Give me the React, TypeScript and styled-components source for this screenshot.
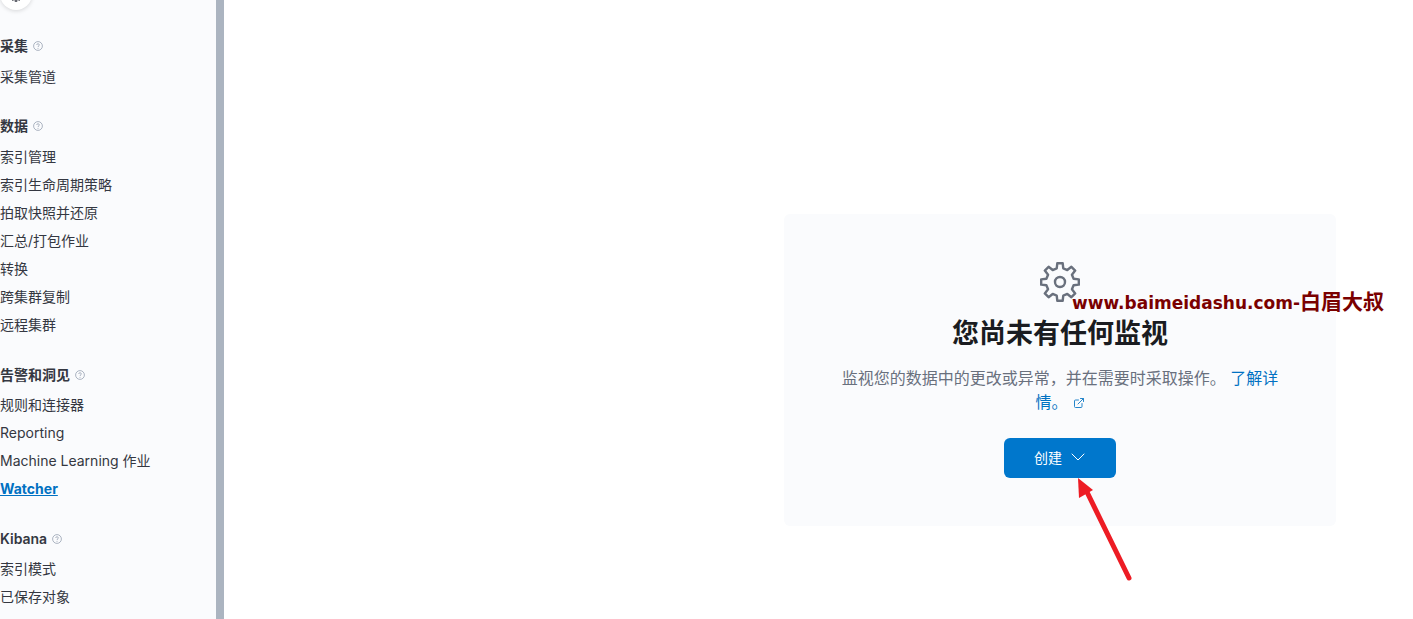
import styled, { createGlobalStyle } from 'styled-components';
import { ChevronDown, ExternalLink } from 'lucide-react';

const NAV_SECTIONS = [
  { title: '采集', links: ['采集管道'] },
  {
    title: '数据',
    links: ['索引管理', '索引生命周期策略', '拍取快照并还原', '汇总/打包作业', '转换', '跨集群复制', '远程集群'],
  },
  { title: '告警和洞见', links: ['规则和连接器', 'Reporting', 'Machine Learning 作业', 'Watcher'] },
  { title: 'Kibana', links: ['索引模式', '已保存对象'] },
];

const ACTIVE_LINK = 'Watcher';

function gearPath(cx: number, cy: number, outer: number, inner: number, teeth: number) {
  const step = (Math.PI * 2) / teeth;
  const points: string[] = [];
  for (let i = 0; i < teeth; i++) {
    const a = i * step - Math.PI / 2;
    [
      [inner, a - step * 0.3],
      [outer, a - step * 0.18],
      [outer, a + step * 0.18],
      [inner, a + step * 0.3],
    ].forEach(([r, t]) => points.push(`${(cx + r * Math.cos(t)).toFixed(2)} ${(cy + r * Math.sin(t)).toFixed(2)}`));
  }
  return `M${points.join('L')}Z`;
}

function HelpIcon() {
  return (
    <S.HelpSvg viewBox="0 0 10 10">
      <circle cx="5" cy="5" r="4.4" fill="none" stroke="currentColor" strokeWidth="0.8" />
      <path d="M3.7 4c0-.8.6-1.3 1.3-1.3S6.300 3.200 6.300 3.900C6.300 5 5 4.900 5 6" fill="none" stroke="currentColor" strokeWidth="0.8" />
      <circle cx="5" cy="7.300" r="0.5" fill="currentColor" />
    </S.HelpSvg>
  );
}

export default function App() {
  return (
    <S.Page>
      <GlobalStyle />
      <S.Sidebar>
        <S.RoundButton>
          <S.RoundGlyph viewBox="0 0 16 16">
            <path d={gearPath(8, 8, 6, 4.500, 8)} fill="none" stroke="#343741" strokeWidth="1.200" />
          </S.RoundGlyph>
        </S.RoundButton>
        {NAV_SECTIONS.map(section => (
          <S.Section key={section.title}>
            <S.SectionTitle>
              {section.title}
              <HelpIcon />
            </S.SectionTitle>
            <S.LinkList>
              {section.links.map(link => (
                <S.NavLink key={link} $active={link === ACTIVE_LINK}>
                  {link}
                </S.NavLink>
              ))}
            </S.LinkList>
          </S.Section>
        ))}
      </S.Sidebar>
      <S.Scrollbar />
      <S.Main>
        <S.Card>
          <S.GearIcon viewBox="0 0 40 40">
            <path d={gearPath(20, 20, 19, 14, 8)} fill="none" stroke="#69707d" strokeWidth="2.400" strokeLinejoin="round" />
            <circle cx="20" cy="20" r="5" fill="none" stroke="#69707d" strokeWidth="2.400" />
          </S.GearIcon>
          <S.Title>您尚未有任何监视</S.Title>
          <S.Description>
            监视您的数据中的更改或异常，并在需要时采取操作。 <S.DocLink>了解详情。<S.LinkIcon size={12} /></S.DocLink>
          </S.Description>
          <S.CreateButton>
            创建
            <ChevronDown size={24} strokeWidth={1} />
          </S.CreateButton>
        </S.Card>
      </S.Main>
      <S.Watermark>
        www.baimeidashu.com-<S.WatermarkCjk>白眉大叔</S.WatermarkCjk>
      </S.Watermark>
      <S.Arrow viewBox="0 0 60 110">
        <path d="M54 102 L11 14" stroke="#ed1c24" strokeWidth="5" strokeLinecap="round" fill="none" />
        <path d="M3 2 L4 22 L18 14 Z" fill="#ed1c24" />
      </S.Arrow>
    </S.Page>
  );
}

const GlobalStyle = createGlobalStyle`
  html, body {
    margin: 0;
    background: #fff;
    font-family: Inter, "Noto Sans CJK SC", sans-serif;
    color: #343741;
  }
`;

const S = {
  Page: styled.div`
    position: relative;
    display: flex;
    width: 1413px;
    height: 619px;
    overflow: hidden;
  `,

  Sidebar: styled.nav`
    width: 216px;
    flex-shrink: 0;
    background: #fafbfd;
    height: 619px;
  `,

  Scrollbar: styled.div`
    width: 8px;
    flex-shrink: 0;
    background: #abb4c0;
  `,

  RoundButton: styled.div`
    width: 32px;
    height: 32px;
    margin: -22px 0 0 0;
    border-radius: 50%;
    background: #fff;
    box-shadow: 0 1px 4px rgba(0, 0, 0, 0.15);
    display: flex;
    align-items: flex-end;
    justify-content: center;
    padding-bottom: 7px;
    box-sizing: border-box;
  `,

  RoundGlyph: styled.svg`
    width: 14px;
    height: 14px;
  `,

  Section: styled.section`
    margin-top: 25px;
    &:first-of-type {
      margin-top: 26px;
    }
    &:nth-of-type(n + 3) {
      margin-top: 26px;
    }
    &:nth-of-type(n + 3) > div {
      margin-top: 6px;
    }
  `,

  SectionTitle: styled.h3`
    display: flex;
    align-items: center;
    gap: 5px;
    height: 20px;
    margin: 0;
    font-size: 14px;
    line-height: 20px;
    font-weight: 600;
    color: #343741;
  `,

  HelpSvg: styled.svg`
    width: 10px;
    height: 10px;
    color: #98a2b3;
  `,

  LinkList: styled.div`
    display: flex;
    flex-direction: column;
    margin-top: 7px;
  `,

  NavLink: styled.a<{ $active?: boolean }>`
    height: 28px;
    font-size: 14px;
    line-height: 28px;
    white-space: nowrap;
    color: ${({ $active }) => ($active ? '#0071c2' : '#343741')};
    font-weight: ${({ $active }) => ($active ? 700 : 400)};
    text-decoration: ${({ $active }) => ($active ? 'underline' : 'none')};
  `,

  Main: styled.main`
    flex: 1;
    display: flex;
    justify-content: flex-end;
    align-items: flex-start;
    padding: 214px 77px 0 0;
    background: #fff;
  `,

  Card: styled.div`
    width: 552px;
    height: 312px;
    box-sizing: border-box;
    padding: 48px 56px 0;
    border-radius: 6px;
    background: #fafbfd;
    display: flex;
    flex-direction: column;
    align-items: center;
    text-align: center;
  `,

  GearIcon: styled.svg`
    width: 40px;
    height: 40px;
    flex-shrink: 0;
  `,

  Title: styled.h2`
    margin: 12px 0 0;
    font-size: 27px;
    line-height: 40px;
    font-weight: 700;
    color: #1a1c21;
  `,

  Description: styled.p`
    margin: 12px 0 0;
    font-size: 16px;
    line-height: 24px;
    color: #69707d;
  `,

  DocLink: styled.a`
    color: #0071c2;
  `,

  LinkIcon: styled(ExternalLink)`
    margin-left: 5px;
    vertical-align: -1px;
    opacity: 0.85;
  `,

  CreateButton: styled.button`
    display: flex;
    align-items: center;
    justify-content: center;
    gap: 4px;
    width: 112px;
    height: 40px;
    margin-top: 24px;
    padding: 0 0 2px 4px;
    flex-shrink: 0;
    border: none;
    border-radius: 6px;
    background: #0077cc;
    color: #fff;
    font-family: inherit;
    font-size: 14px;
  `,

  Watermark: styled.div`
    position: absolute;
    left: 1072px;
    top: 290px;
    font-family: "DejaVu Sans", "Noto Sans CJK SC", sans-serif;
    font-size: 17px;
    line-height: 24px;
    font-weight: 700;
    letter-spacing: 0;
    white-space: nowrap;
    color: #7a0000;
  `,

  WatermarkCjk: styled.span`
    font-size: 21px;
  `,

  Arrow: styled.svg`
    position: absolute;
    left: 1075px;
    top: 476px;
    width: 60px;
    height: 110px;
  `,
};
